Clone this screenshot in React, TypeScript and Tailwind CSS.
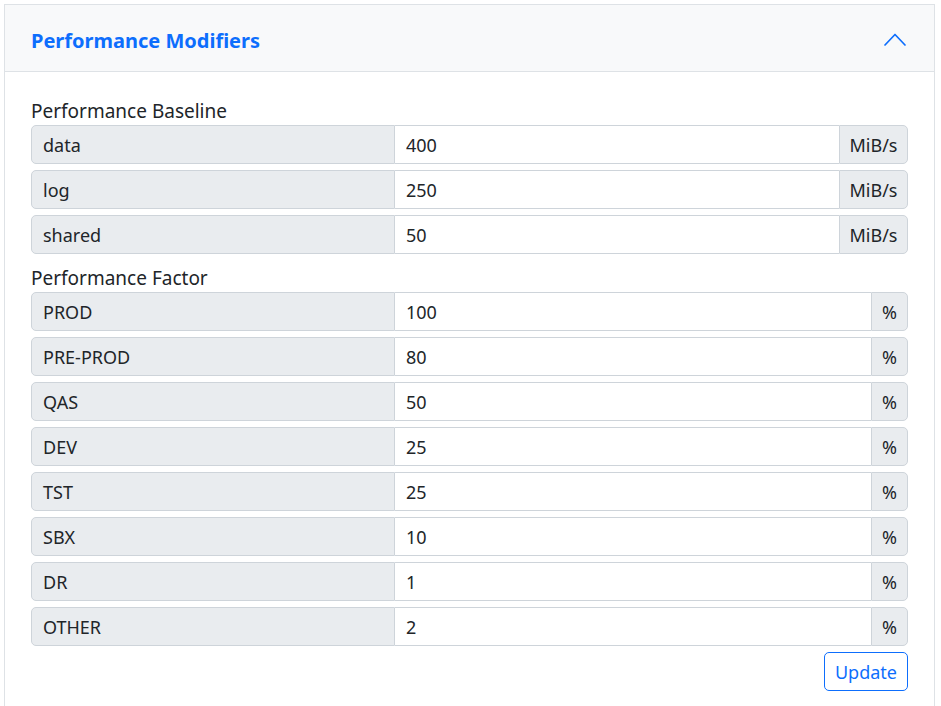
const baseline = [
  { label: "data", value: "400" },
  { label: "log", value: "250" },
  { label: "shared", value: "50" },
];

const factors = [
  { label: "PROD", value: "100" },
  { label: "PRE-PROD", value: "80" },
  { label: "QAS", value: "50" },
  { label: "DEV", value: "25" },
  { label: "TST", value: "25" },
  { label: "SBX", value: "10" },
  { label: "DR", value: "1" },
  { label: "OTHER", value: "2" },
];

const Row = ({ label, value, unit, wide }: { label: string; value: string; unit: string; wide?: boolean }) => (
  <div className="flex h-[39px] text-[18px] text-[#212529]">
    <div className="w-[364px] shrink-0 flex items-center px-[11px] pt-[2px] bg-[#e9ecef] border border-[#ced4da] rounded-l-[5px]">
      {label}
    </div>
    <input
      defaultValue={value}
      className="flex-1 min-w-0 px-[11px] pt-[2px] bg-white border-y border-[#ced4da] outline-none"
    />
    <div
      className={`${wide ? "w-[69px]" : "w-[37px]"} shrink-0 flex items-center justify-center pt-[2px] bg-[#e9ecef] border border-[#ced4da] rounded-r-[5px]`}
    >
      {unit}
    </div>
  </div>
);

export default function App() {
  return (
    <div className="w-[941px] h-[706px] overflow-hidden bg-white pt-[4px] pl-[4px] pr-[6px]" style={{ fontFamily: '"Noto Sans", sans-serif' }}>
      <div className="border border-[#dee2e6] border-b-0 h-[720px]">
        <div className="h-[67px] flex items-center justify-between pl-[26px] pr-[28px] pt-[5px] bg-[#f8f9fa] border-b border-[#dee2e6]">
          <span className="text-[20px] font-bold text-[#0d6efd]">Performance Modifiers</span>
          <svg width="22" height="13" viewBox="0 0 22 13" fill="none" className="-mt-[3px]">
            <polyline points="1,12 11,1.5 21,12" stroke="#0d6efd" strokeWidth="1.7" strokeLinejoin="round" strokeLinecap="round" />
          </svg>
        </div>
        <div className="px-[26px] pt-[25px]">
          <div className="text-[19px] text-[#212529] leading-[28px]">Performance Baseline</div>
          <div className="flex flex-col gap-[6px]">
            {baseline.map((r) => (
              <Row key={r.label} {...r} unit="MiB/s" wide />
            ))}
          </div>
          <div className="text-[19px] text-[#212529] leading-[28px] mt-[10px]">Performance Factor</div>
          <div className="flex flex-col gap-[6px]">
            {factors.map((r) => (
              <Row key={r.label} {...r} unit="%" />
            ))}
          </div>
          <div className="flex justify-end mt-[6px]">
            <button className="h-[39px] px-[10px] pt-[2px] text-[18px] text-[#0d6efd] border border-[#0d6efd] rounded-[5px] bg-white">
              Update
            </button>
          </div>
        </div>
      </div>
    </div>
  );
}
